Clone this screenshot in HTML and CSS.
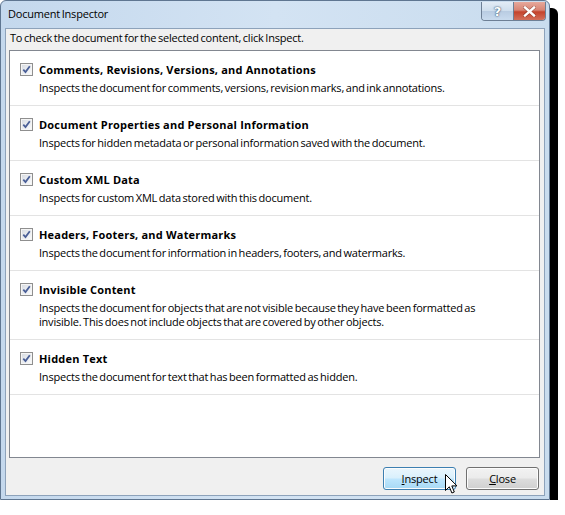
FILE: index.html
```html
<!DOCTYPE html>
<html>
<head>
<meta charset="utf-8">
<link rel="stylesheet" href="styles.css">
</head>
<body>
<div class="window">
  <div class="titlebar">
    <span class="title">Document Inspector</span>
    <div class="caption-buttons">
      <div class="cap-btn help">?</div>
      <div class="cap-btn close">
        <svg width="13" height="11" viewBox="0 0 13 11"><path d="M2 1.5 L11 9.5 M11 1.5 L2 9.5" stroke="#5a1a10" stroke-width="3.6" stroke-linecap="square" fill="none" opacity="0.45"/><path d="M2 1.5 L11 9.5 M11 1.5 L2 9.5" stroke="#ffffff" stroke-width="2.4" stroke-linecap="square" fill="none"/></svg>
      </div>
    </div>
  </div>
  <div class="client">
    <p class="intro">To check the document for the selected content, click Inspect.</p>
    <div class="listbox">
      <div class="item">
        <span class="check"><svg width="9" height="9" viewBox="0 0 9 9"><path d="M1.3 4.6 L3.5 7 L7.8 1.2" stroke="#4a5f97" stroke-width="1.8" fill="none"/></svg></span>
        <div class="item-text">
          <div class="item-title">Comments, Revisions, Versions, and Annotations</div>
          <div class="item-desc">Inspects the document for comments, versions, revision marks, and ink annotations.</div>
        </div>
      </div>
      <div class="item">
        <span class="check"><svg width="9" height="9" viewBox="0 0 9 9"><path d="M1.3 4.6 L3.5 7 L7.8 1.2" stroke="#4a5f97" stroke-width="1.8" fill="none"/></svg></span>
        <div class="item-text">
          <div class="item-title">Document Properties and Personal Information</div>
          <div class="item-desc">Inspects for hidden metadata or personal information saved with the document.</div>
        </div>
      </div>
      <div class="item">
        <span class="check"><svg width="9" height="9" viewBox="0 0 9 9"><path d="M1.3 4.6 L3.5 7 L7.8 1.2" stroke="#4a5f97" stroke-width="1.8" fill="none"/></svg></span>
        <div class="item-text">
          <div class="item-title">Custom XML Data</div>
          <div class="item-desc">Inspects for custom XML data stored with this document.</div>
        </div>
      </div>
      <div class="item">
        <span class="check"><svg width="9" height="9" viewBox="0 0 9 9"><path d="M1.3 4.6 L3.5 7 L7.8 1.2" stroke="#4a5f97" stroke-width="1.8" fill="none"/></svg></span>
        <div class="item-text">
          <div class="item-title">Headers, Footers, and Watermarks</div>
          <div class="item-desc">Inspects the document for information in headers, footers, and watermarks.</div>
        </div>
      </div>
      <div class="item">
        <span class="check"><svg width="9" height="9" viewBox="0 0 9 9"><path d="M1.3 4.6 L3.5 7 L7.8 1.2" stroke="#4a5f97" stroke-width="1.8" fill="none"/></svg></span>
        <div class="item-text">
          <div class="item-title">Invisible Content</div>
          <div class="item-desc">Inspects the document for objects that are not visible because they have been formatted as<br>invisible. This does not include objects that are covered by other objects.</div>
        </div>
      </div>
      <div class="item">
        <span class="check"><svg width="9" height="9" viewBox="0 0 9 9"><path d="M1.3 4.6 L3.5 7 L7.8 1.2" stroke="#4a5f97" stroke-width="1.8" fill="none"/></svg></span>
        <div class="item-text">
          <div class="item-title">Hidden Text</div>
          <div class="item-desc">Inspects the document for text that has been formatted as hidden.</div>
        </div>
      </div>
    </div>
    <div class="buttons">
      <div class="btn btn-hot"><span><u>I</u>nspect</span>
        <svg class="cursor" width="14" height="21" viewBox="0 0 14 21"><path d="M0.5 0.5 L0.5 16.5 L4.3 12.8 L6.9 19 L9.3 18 L6.8 11.9 L12 11.9 Z" fill="#ffffff" stroke="#000000" stroke-width="1"/></svg>
      </div>
      <div class="btn"><span><u>C</u>lose</span></div>
    </div>
  </div>
</div>
</body>
</html>
```
FILE: styles.css
```css
html, body {
  margin: 0;
  padding: 0;
  background: #ffffff;
}
body {
  font-family: "Open Sans", "Noto Sans", sans-serif;
  font-size: 11px;
  letter-spacing: -0.2px;
  word-spacing: -1px;
  color: #000000;
}
.window {
  border: 1px solid #5f7691;
  border-radius: 6px 6px 0 0;
  background: linear-gradient(90deg, #c4d8ed 0%, #d3e3f3 50%, #c9dcee 100%);
  box-shadow: 8px 8px 0 0 #000000;
  display: flex;
  flex-direction: column;
  padding: 0 4px 3px 4px;
  box-sizing: border-box;
  width: 550px;
  height: 500px;
}
.titlebar {
  height: 27px;
  display: flex;
  align-items: flex-start;
  justify-content: space-between;
  flex-shrink: 0;
}
.title {
  margin-top: 5px;
  margin-left: 3px;
  line-height: 16px;
  color: #000000;
}
.caption-buttons {
  display: flex;
  margin-top: 1px;
  margin-right: -1px;
  border: 1px solid #6d7f95;
  border-top: none;
  border-radius: 0 0 4px 4px;
  overflow: hidden;
}
.cap-btn {
  height: 18px;
  display: flex;
  align-items: center;
  justify-content: center;
}
.cap-btn.help {
  width: 31px;
  background: linear-gradient(180deg, #e2ebf5 0%, #cfdeed 48%, #b9cce2 52%, #c9dbee 100%);
  border-right: 1px solid #6d7f95;
  color: #ffffff;
  font-family: "DejaVu Sans", sans-serif;
  font-weight: bold;
  font-size: 13px;
  letter-spacing: 0;
  text-shadow: 0 0 2px #34506f, 0 0 1px #34506f;
}
.cap-btn.close {
  width: 31px;
  background: linear-gradient(180deg, #e6a99c 0%, #d88474 45%, #c4432c 55%, #d3705b 100%);
}
.client {
  flex: 1;
  background: #f0f0f0;
  border: 1px solid #8da2ba;
  display: flex;
  flex-direction: column;
  padding: 0 4px 0 3px;
}
.intro {
  margin: 1px 0 0 0;
  line-height: 16px;
  height: 20px;
  padding-left: 1px;
}
.listbox {
  background: #ffffff;
  border: 1px solid #828790;
  height: 408px;
  box-sizing: border-box;
}
.item {
  display: flex;
  align-items: flex-start;
  gap: 6px;
  padding: 11px 10px 10px 10px;
  border-bottom: 1px solid #e3e3e3;
}
.check {
  width: 11px;
  height: 11px;
  border: 1px solid #8f8f8f;
  background: linear-gradient(135deg, #d6dae0 0%, #f0f2f5 70%, #ffffff 100%);
  display: flex;
  align-items: center;
  justify-content: center;
  margin-top: 1px;
  flex-shrink: 0;
  box-shadow: inset 0 0 0 1px #f5f5f5;
}
.item-title {
  font-weight: bold;
  line-height: 16px;
  letter-spacing: 0.2px;
  word-spacing: 0;
}
.item-desc {
  margin-top: 3px;
  line-height: 14px;
  white-space: nowrap;
}
.buttons {
  display: flex;
  justify-content: flex-end;
  gap: 10px;
  margin-top: 9px;
  padding-right: 1px;
}
.btn {
  position: relative;
  width: 73px;
  height: 23px;
  box-sizing: border-box;
  border: 1px solid #707070;
  border-radius: 3px;
  background: linear-gradient(180deg, #f2f2f2 0%, #ebebeb 48%, #dddddd 52%, #cfcfcf 100%);
  display: flex;
  align-items: center;
  justify-content: center;
  box-shadow: inset 0 0 0 1px #fcfcfc;
}
.btn-hot {
  border-color: #3c7fb1;
  background: linear-gradient(180deg, #eaf6fd 0%, #d9f0fc 48%, #bee6fd 52%, #a7d9f5 100%);
}
.cursor {
  position: absolute;
  left: 61px;
  top: 6px;
}
```
